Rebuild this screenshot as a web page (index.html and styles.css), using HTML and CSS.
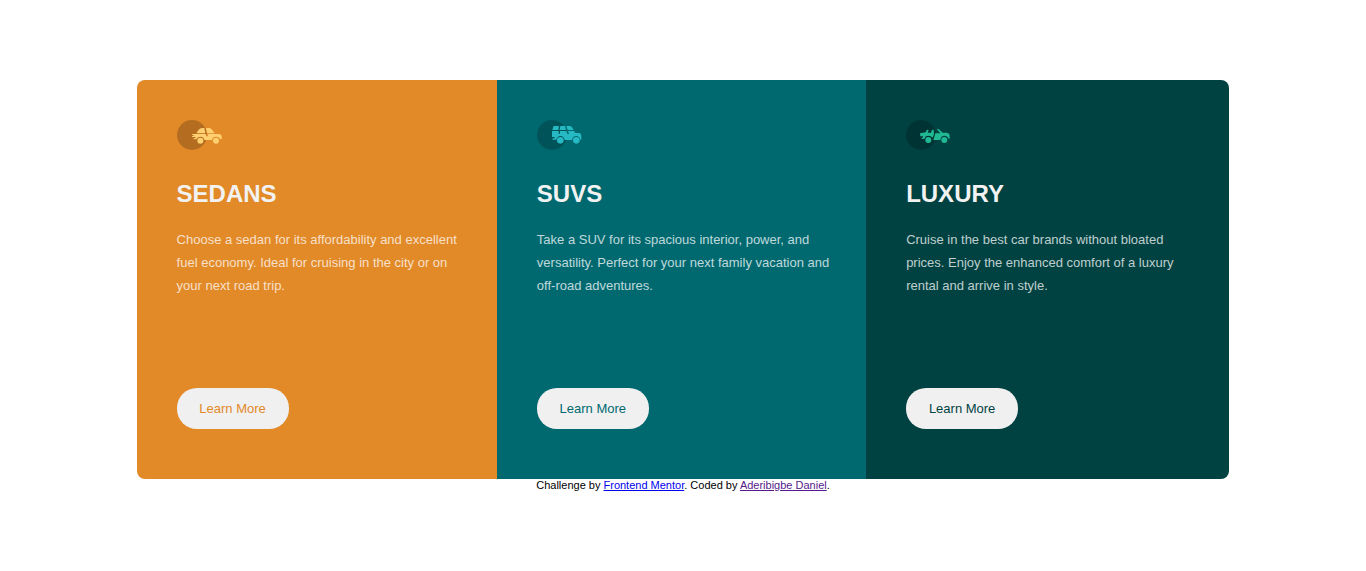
FILE: index.html
```html
<!DOCTYPE html>
<html lang="en">
<head>
<meta charset="utf-8">
<meta name="viewport" content="width=device-width, initial-scale=1">
<title>3-column preview card</title>
<link rel="stylesheet" href="styles.css">
</head>
<body>
<main class="cards">
  <section class="card sedans">
    <svg class="icon" viewBox="21 24 135 90" aria-hidden="true">
      <circle class="disc" cx="66" cy="69" r="45"/>
      <g class="car">
        <path d="M79 64L85 55Q90 48 97 48H103L106 64ZM108 48H117Q123 48 127 54L134 64H111Z"/>
        <path d="M66 66H107L110 73H115L112 66H146Q155 67 155 73V82H151Q148 74 138 74Q128 74 126 84H103Q101 74 91 74Q82 74 79 82H70V79H76V75H66V72H71V69H66Z"/>
        <circle cx="91" cy="86" r="9"/><circle cx="138" cy="86" r="9"/>
      </g>
    </svg>
    <h2 class="title">SEDANS</h2>
    <p class="text">Choose a sedan for its affordability and excellent fuel economy. Ideal for cruising in the city or on your next road trip.</p>
    <button class="button" type="button">Learn More</button>
  </section>
  <section class="card suvs">
    <svg class="icon" viewBox="21 24 135 90" aria-hidden="true">
      <circle class="disc" cx="66" cy="69" r="45"/>
      <g class="car">
        <path d="M71 42H87L85 54H67ZM91 42H105L108 54H89ZM109 42H119Q123 42 126 46L131 54H113Z"/>
        <path d="M66 57H86V65H90V57H109L112 66H117L114 57H132L136 63H147Q154 64 154 71V83H151Q148 72 139 72Q128 72 126 84H104Q101 72 91 72Q82 72 79 83H68V79H74V75H66Z"/>
        <circle cx="91" cy="85" r="10"/><circle cx="139" cy="85" r="10"/>
      </g>
    </svg>
    <h2 class="title">SUVS</h2>
    <p class="text">Take a SUV for its spacious interior, power, and versatility. Perfect for your next family vacation and off-road adventures.</p>
    <button class="button" type="button">Learn More</button>
  </section>
  <section class="card luxury">
    <svg class="icon" viewBox="21 24 135 90" aria-hidden="true">
      <circle class="disc" cx="66" cy="69" r="45"/>
      <g class="car">
        <path d="M63 64L80 61L84 53L89 54L86 62H96L99 53H104L105 66L101 77Q96 71 88 71Q78 71 76 81H68V77H72V73H64Z"/>
        <path d="M114 52L118 50L131 62H143Q152 64 152 71V80H149Q145 71 136 71Q126 71 124 84H103L109 64H124Z"/>
        <circle cx="88" cy="84" r="9"/><circle cx="136" cy="84" r="9"/>
      </g>
    </svg>
    <h2 class="title">LUXURY</h2>
    <p class="text">Cruise in the best car brands without bloated prices. Enjoy the enhanced comfort of a luxury rental and arrive in style.</p>
    <button class="button" type="button">Learn More</button>
  </section>
</main>
<footer class="attribution">
  Challenge by <a class="mentor" href="https://www.frontendmentor.io">Frontend Mentor</a>.
  Coded by <a class="author" href="#">Aderibigbe Daniel</a>.
</footer>
</body>
</html>
```
FILE: styles.css
```css
* {
  box-sizing: border-box;
}

body {
  margin: 0;
  padding-top: 80px;
  background: #fff;
  font-family: "Liberation Sans", Arial, sans-serif;
}

.cards {
  display: grid;
  grid-template-columns: 360fr 369fr 363fr;
  width: 80%;
  margin: 0 auto;
  border-radius: 8px;
  overflow: hidden;
}

.card {
  display: flex;
  flex-direction: column;
  align-items: flex-start;
  padding: 40px 32px 50px 40px;
  background: var(--tone);
}

.sedans {
  --tone: #e28928;
  --car: #ffcf70;
}

.suvs {
  --tone: #006970;
  --car: #26b9c3;
}

.luxury {
  --tone: #004241;
  --car: #20b994;
}

.icon {
  width: 45px;
  height: 30px;
}

.disc {
  fill: #000;
  fill-opacity: 0.2;
}

.car {
  fill: var(--car);
}

.title {
  margin: 30px 0 20px;
  color: #f2f2f2;
  font-size: 24px;
  line-height: 28px;
}

.text {
  margin: 0 0 91px;
  color: rgba(255, 255, 255, 0.75);
  font-size: 13px;
  line-height: 23px;
}

.button {
  min-width: 112px;
  height: 41px;
  padding: 0 20px;
  border: 0;
  border-radius: 20px;
  background: #f0f0f0;
  color: var(--tone);
  font-family: inherit;
  font-size: 13px;
  cursor: pointer;
}

.attribution {
  font-size: 11px;
  line-height: 13px;
  text-align: center;
}

.mentor {
  color: #0000ee;
}

.author {
  color: #551a8b;
}

@media (max-width: 800px) {
  .cards {
    grid-template-columns: 1fr;
  }
}
```
